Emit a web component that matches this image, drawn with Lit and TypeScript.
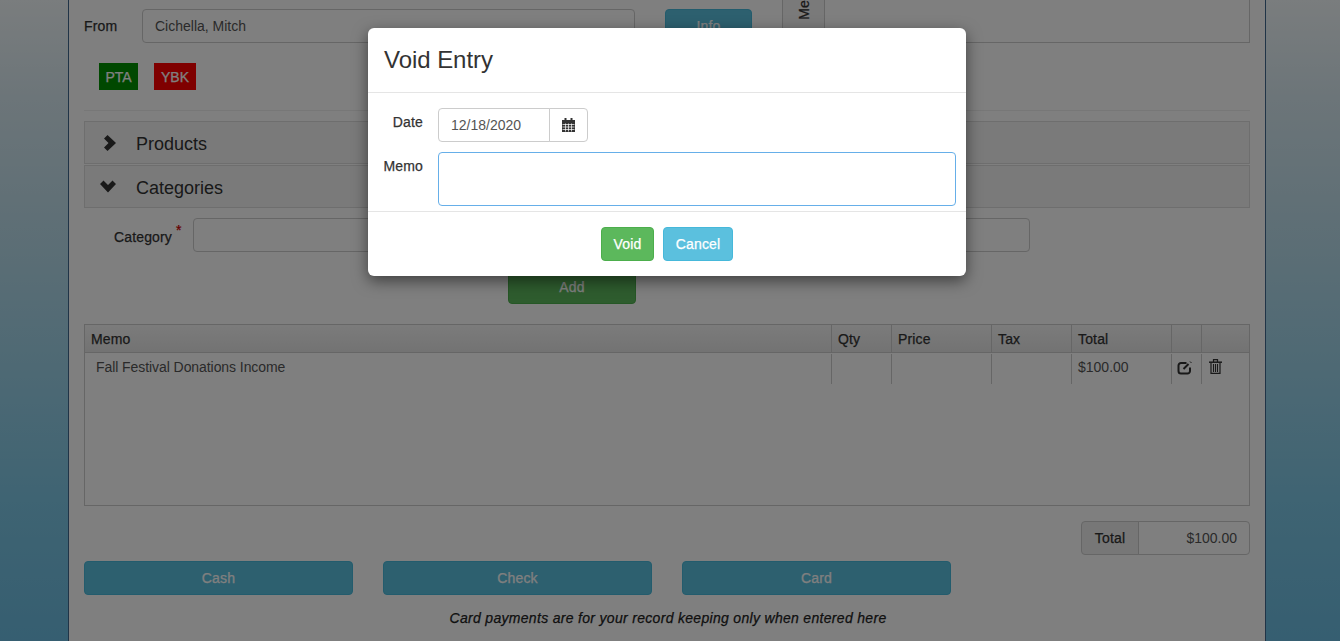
import { LitElement, html, css } from "lit";
import { customElement } from "lit/decorators.js";

const rows = [{ memo: "Fall Festival Donations Income", total: "$100.00" }];

@customElement("app-root")
export class AppRoot extends LitElement {
  static styles = css`
    :host {
      display: block;
      position: relative;
      height: 641px;
      overflow: hidden;
      font-family: "Liberation Sans", Arial, sans-serif;
      font-size: 14px;
      line-height: 20px;
      color: #333;
      background: linear-gradient(#f4fafc 0, #d8eaf2 100px, #bfdfec 215px, #7ec8e6 500px, #6cbde2 641px);
    }
    /* the labels look half bold in the original, plain weight with a thin stroke gets closest */
    .from-label,
    .cat-label,
    .grid-head,
    .sum-label,
    .modal-row label,
    .side-tab span,
    .tag,
    .btn,
    .note {
      font-weight: normal;
      -webkit-text-stroke: 0.25px currentColor;
      letter-spacing: 0.15px;
    }
    .page {
      box-sizing: border-box;
      width: 1198px;
      height: 641px;
      margin-left: 68px;
      padding: 0 15px;
      background: #fff;
      border-left: 1px solid #40688f;
      border-right: 1px solid #40688f;
      overflow: hidden;
    }
    .from-row {
      display: flex;
      height: 43px;
    }
    .from-label {
      width: 58px;
      padding-top: 16px;
    }
    .field {
      box-sizing: border-box;
      height: 34px;
      border: 1px solid #ccc;
      border-radius: 4px;
      background: #fff;
      color: #555;
      padding: 6px 12px;
    }
    .from-field {
      width: 493px;
      margin-top: 9px;
    }
    .btn {
      box-sizing: border-box;
      display: flex;
      align-items: center;
      justify-content: center;
      height: 34px;
      border-radius: 4px;
      color: #fff;
      background: #5bc0de;
      border: 1px solid #46b8da;
    }
    .btn.green {
      background: #5cb85c;
      border-color: #4cae4c;
    }
    .info {
      width: 87px;
      margin: 9px 0 0 30px;
    }
    .side-tab {
      box-sizing: border-box;
      display: flex;
      justify-content: center;
      align-items: flex-start;
      width: 43px;
      height: 43px;
      margin-left: 30px;
      border: 1px solid #ccc;
      border-top: 0;
      border-right: 0;
      background: #f5f5f5;
      overflow: hidden;
    }
    .side-tab span {
      writing-mode: vertical-rl;
      transform: rotate(180deg);
    }
    .side-body {
      flex: 1;
      height: 43px;
      box-sizing: border-box;
      border: 1px solid #ccc;
      border-top: 0;
      margin-left: -1px;
    }
    .tags {
      display: flex;
      gap: 16px;
      padding: 20px 0 0 15px;
      height: 27px;
    }
    .tag {
      display: flex;
      align-items: center;
      justify-content: center;
      height: 27px;
      color: #fff;
      letter-spacing: 0;
    }
    .tag.pta {
      width: 39px;
      background: #009000;
    }
    .tag.ybk {
      width: 42px;
      background: #ff0000;
    }
    hr {
      margin: 20px 0 10px;
      border: 0;
      border-top: 1px solid #eee;
    }
    .panel {
      box-sizing: border-box;
      display: flex;
      align-items: center;
      height: 43px;
      margin-bottom: 1px;
      background: #f5f5f5;
      border: 1px solid #ddd;
      font-size: 18px;
    }
    .panel svg {
      width: 18px;
      height: 18px;
      fill: #333;
    }
    .panel .right {
      margin: 0 17px 0 16px;
    }
    .panel .down {
      margin: 0 18px 0 15px;
    }
    .panel span {
      padding-top: 2px;
    }
    .cat-row {
      display: flex;
      margin-top: 10px;
    }
    .cat-label {
      box-sizing: border-box;
      width: 109px;
      padding: 9px 0 0 30px;
      white-space: nowrap;
    }
    .cat-label i {
      color: #c00;
      font-style: normal;
      line-height: 0;
      margin-left: 4px;
      vertical-align: 7px;
    }
    .cat-field {
      width: 837px;
    }
    .add {
      width: 128px;
      margin: 18px 0 0 424px;
    }
    .grid {
      box-sizing: border-box;
      height: 182px;
      margin-top: 20px;
      border: 1px solid #ccc;
    }
    .grid-row {
      display: grid;
      grid-template-columns: 746px 60px 100px 80px 100px 30px 1fr;
    }
    .grid-head {
      box-sizing: border-box;
      height: 28px;
      background: linear-gradient(#f7f7f7, #e6e6e6);
      border-bottom: 1px solid #ccc;
    }
    .grid-head > div {
      box-sizing: border-box;
      padding: 4px 6px 0;
    }
    .grid-head > div + div,
    .grid-body > div + div {
      border-left: 1px solid #ccc;
    }
    .grid-body {
      height: 30px;
      margin-top: 1px;
      color: #555;
    }
    .grid-body > div {
      box-sizing: border-box;
      padding: 3px 6px 0;
    }
    .grid-body > div:first-child {
      padding-left: 11px;
      letter-spacing: -0.07px;
    }
    .grid-body svg {
      display: block;
      fill: none;
      stroke: #333;
    }
    .edit-icon {
      width: 15px;
      height: 14px;
      margin: 4px 0 0 -1px;
    }
    .trash-icon {
      width: 13px;
      height: 15px;
      margin: 2px 0 0 1px;
    }
    .summary {
      display: flex;
      justify-content: flex-end;
      margin-top: 15px;
    }
    .summary > div {
      box-sizing: border-box;
      height: 34px;
      display: flex;
      align-items: center;
      border: 1px solid #ccc;
    }
    .sum-label {
      width: 58px;
      justify-content: center;
      background: #eee;
      border-radius: 4px 0 0 4px;
    }
    .sum-value {
      width: 112px;
      justify-content: flex-end;
      padding-right: 12px;
      margin-left: -1px;
      color: #555;
      border-radius: 0 4px 4px 0;
    }
    .pay {
      display: flex;
      gap: 30px;
      margin-top: 6px;
    }
    .pay .btn {
      width: 269px;
    }
    .note {
      margin-top: 13px;
      padding-left: 2px;
      text-align: center;
      font-style: italic;
      letter-spacing: 0.31px;
      color: #222;
    }
    .backdrop {
      position: absolute;
      inset: 0;
      background: rgba(0, 0, 0, 0.5);
    }
    .modal {
      position: absolute;
      left: 368px;
      top: 28px;
      width: 598px;
      height: 248px;
      background: #fff;
      border-radius: 6px;
      box-shadow: 0 5px 15px rgba(0, 0, 0, 0.5);
      display: flex;
      flex-direction: column;
    }
    .modal-head {
      box-sizing: border-box;
      height: 65px;
      padding: 15px 16px;
      border-bottom: 1px solid #e5e5e5;
      font-size: 24px;
      line-height: 33px;
      letter-spacing: -0.05px;
    }
    .modal-body {
      height: 118px;
      box-sizing: border-box;
      padding-top: 15px;
    }
    .modal-row {
      display: flex;
    }
    .modal-row label {
      box-sizing: border-box;
      width: 70px;
      padding: 0 15px;
      text-align: right;
      white-space: nowrap;
    }
    .date-row label {
      padding-top: 4px;
    }
    .memo-row {
      margin-top: 10px;
    }
    .memo-row label {
      padding-top: 4px;
    }
    .date-field {
      width: 112px;
      border-radius: 4px 0 0 4px;
    }
    .date-btn {
      box-sizing: border-box;
      width: 39px;
      height: 34px;
      margin-left: -1px;
      display: flex;
      align-items: center;
      justify-content: center;
      border: 1px solid #ccc;
      border-radius: 0 4px 4px 0;
    }
    .date-btn svg {
      width: 13px;
      height: 14px;
      fill: #333;
    }
    .memo-box {
      box-sizing: border-box;
      width: 518px;
      height: 54px;
      border: 1px solid #66afe9;
      border-radius: 4px;
    }
    .modal-foot {
      flex: 1;
      display: flex;
      justify-content: center;
      gap: 9px;
      padding-top: 15px;
      border-top: 1px solid #e5e5e5;
    }
    .void {
      width: 53px;
    }
    .cancel {
      width: 70px;
    }
  `;

  private editIcon() {
    return html`<svg class="edit-icon" viewBox="0 0 15 14">
      <path d="M9.500 2H4a2.500 2.500 0 0 0-2.500 2.500V10A2.500 2.500 0 0 0 4 12.500h6.500A2.500 2.500 0 0 0 13 10V6.500" stroke-width="2" />
      <path d="M6.500 8l5-5" stroke-width="2" />
      <path d="M13 .5l1.500 1.500" stroke-width="1" />
    </svg>`;
  }

  private trashIcon() {
    return html`<svg class="trash-icon" viewBox="0 0 13 15">
      <path d="M4.500 3V.7h4V3" stroke-width="1.200" />
      <path d="M0 3.200h13" stroke-width="1.500" />
      <path d="M2 4v10.400h9V4" stroke-width="1.200" />
      <path d="M4.500 5v8M6.500 5v8M8.500 5v8" stroke-width="1.100" />
    </svg>`;
  }

  render() {
    return html`
      <div class="page">
        <div class="from-row">
          <div class="from-label">From</div>
          <div class="field from-field">Cichella, Mitch</div>
          <div class="btn info">Info</div>
          <div class="side-tab"><span>Me</span></div>
          <div class="side-body"></div>
        </div>
        <div class="tags">
          <div class="tag pta">PTA</div>
          <div class="tag ybk">YBK</div>
        </div>
        <hr />
        <div class="panel">
          <svg class="right" viewBox="0 0 18 18"><path d="M6.500 1L15 9l-8.500 8L3 13.500 7.500 9 3 4.500z" /></svg>
          <span>Products</span>
        </div>
        <div class="panel">
          <svg class="down" viewBox="0 0 18 18"><path d="M0 6L3.500 2.500 8 7l4.500-4.500L16 6l-8 8.500z" /></svg>
          <span>Categories</span>
        </div>
        <div class="cat-row">
          <div class="cat-label">Category<i>*</i></div>
          <div class="field cat-field"></div>
        </div>
        <div class="btn green add">Add</div>
        <div class="grid">
          <div class="grid-row grid-head">
            <div>Memo</div><div>Qty</div><div>Price</div><div>Tax</div><div>Total</div><div></div><div></div>
          </div>
          ${rows.map(
            (row) => html`
              <div class="grid-row grid-body">
                <div>${row.memo}</div><div></div><div></div><div></div>
                <div>${row.total}</div>
                <div>${this.editIcon()}</div>
                <div>${this.trashIcon()}</div>
              </div>
            `
          )}
        </div>
        <div class="summary">
          <div class="sum-label">Total</div>
          <div class="sum-value">$100.00</div>
        </div>
        <div class="pay">
          <div class="btn">Cash</div>
          <div class="btn">Check</div>
          <div class="btn">Card</div>
        </div>
        <div class="note">Card payments are for your record keeping only when entered here</div>
      </div>
      <div class="backdrop"></div>
      <div class="modal">
        <div class="modal-head">Void Entry</div>
        <div class="modal-body">
          <div class="modal-row date-row">
            <label>Date</label>
            <div class="field date-field">12/18/2020</div>
            <div class="date-btn">
              <svg viewBox="0 0 13 14">
                <path d="M2.500 0h2v2h4V0h2v2H13v12H0V2h2.500z" />
                <path d="M.5 6.500h12M.5 9h12M.5 11.500h12M3.500 5.500v8M6.500 5.500v8M9.500 5.500v8" fill="none" stroke="#fff" stroke-width=".7" />
              </svg>
            </div>
          </div>
          <div class="modal-row memo-row">
            <label>Memo</label>
            <div class="memo-box"></div>
          </div>
        </div>
        <div class="modal-foot">
          <div class="btn green void">Void</div>
          <div class="btn cancel">Cancel</div>
        </div>
      </div>
    `;
  }
}
